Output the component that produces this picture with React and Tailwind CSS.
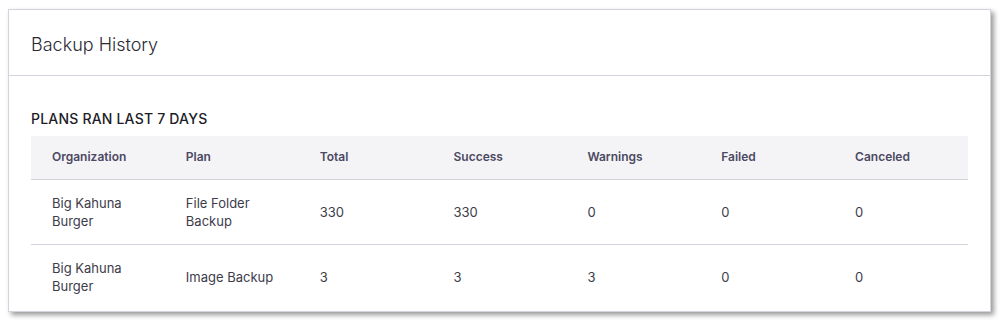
import React from 'react';

const COLUMNS = ['Organization', 'Plan', 'Total', 'Success', 'Warnings', 'Failed', 'Canceled'];

const ROWS = [
  ['Big Kahuna Burger', 'File Folder Backup', '330', '330', '0', '0', '0'],
  ['Big Kahuna Burger', 'Image Backup', '3', '3', '3', '0', '0'],
];

const App = () => {
  return (
    <div className="w-[1003px] h-[320px] bg-white overflow-hidden pt-[9px] pl-[8px] font-['Inter',sans-serif]">
      <div className="w-[983px] h-[303px] bg-white border border-[#d4d2da] shadow-[3px_3px_5px_rgba(0,0,0,0.4)] overflow-hidden">
        {/* Card header */}
        <div className="h-[66px] flex items-center px-[22px] border-b border-[#d4d2da]">
          <h2 className="text-[18px] font-light text-[#2b2a35] mt-[3px]">Backup History</h2>
        </div>

        {/* Card body */}
        <div className="px-[22px] pt-[33px]">
          <h3 className="text-[14px] font-medium text-[#1d1c28] uppercase tracking-[0.2px] leading-[20px] mb-[7px]">
            Plans ran last 7 days
          </h3>
          <table className="w-full table-fixed border-collapse">
            <thead>
              <tr className="bg-[#f4f4f7] border-b border-[#d4d2da]">
                {COLUMNS.map((col) => (
                  <th key={col} className="h-[43px] pl-[21px] text-left text-[12px] font-semibold text-[#4c4962]">
                    {col}
                  </th>
                ))}
              </tr>
            </thead>
            <tbody>
              {ROWS.map((row, i) => (
                <tr key={i} className="border-b border-[#d4d2da] last:border-b-0">
                  {row.map((cell, j) => (
                    <td key={j} className="h-[65px] pl-[21px] pr-[16px] text-[13px] leading-[18px] text-[#3d3c4a]">
                      {cell}
                    </td>
                  ))}
                </tr>
              ))}
            </tbody>
          </table>
        </div>
      </div>
    </div>
  );
};

export default App;
